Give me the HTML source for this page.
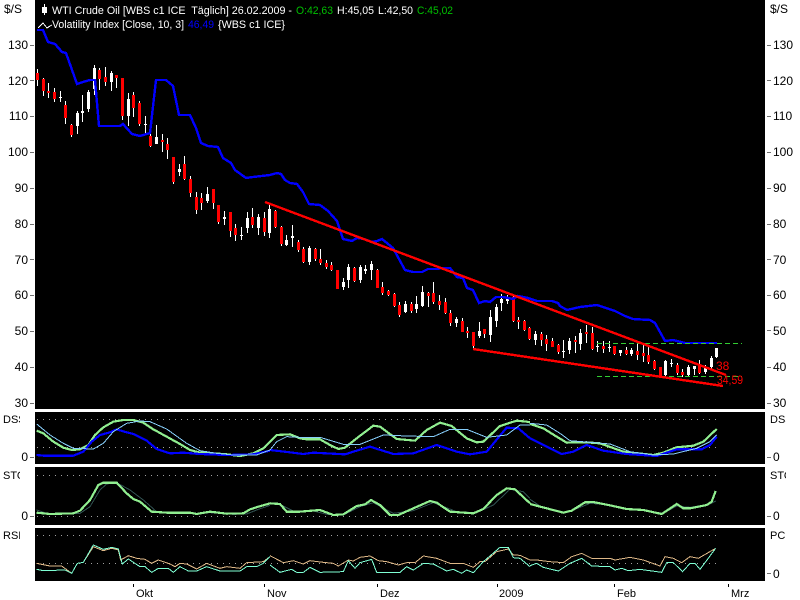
<!DOCTYPE html>
<html>
<head>
<meta charset="utf-8">
<title>WTI Crude Oil</title>
<style>
html,body{margin:0;padding:0;background:#fff;width:800px;height:600px;overflow:hidden}
svg{display:block}
text{font-family:"Liberation Sans",sans-serif;font-size:12px;fill:#000}
.n{font-size:11px}
.l{fill:#fff;font-size:11px}
.c{fill:none;stroke-linejoin:miter;shape-rendering:crispEdges;vector-effect:non-scaling-stroke}
.g{stroke:#90ee90;stroke-width:2.2}
.b{stroke:#0000ff;stroke-width:2.2}
.s{stroke:#87cefa;stroke-width:1}
.d{stroke:#2f4f4f;stroke-width:1}
.t{stroke:#deb887;stroke-width:1}
.q{stroke:#7fffd4;stroke-width:1}
</style>
</head>
<body>
<svg width="800" height="600" viewBox="0 0 800 600" xmlns="http://www.w3.org/2000/svg">
<defs>
<clipPath id="cl"><rect x="0" y="400" width="20" height="190"/></clipPath>
<clipPath id="cr"><rect x="765" y="400" width="21" height="190"/></clipPath>
</defs>
<rect width="800" height="600" fill="#fff"/>
<rect x="35" y="0" width="730" height="409" fill="#000"/>
<rect x="35" y="412" width="730" height="52" fill="#000"/>
<rect x="35" y="467" width="730" height="58" fill="#000"/>
<rect x="35" y="528" width="730" height="53" fill="#000"/>

<!-- axis ticks -->
<path shape-rendering="crispEdges" fill="none" stroke="#707070" stroke-width="1" d="M30 45.5h4M30 80.5h4M30 116.5h4M30 152.5h4M30 188.5h4M30 224.5h4M30 259.5h4M30 295.5h4M30 331.5h4M30 367.5h4M30 403.5h4M30 457.5h4M30 516.5h4M767 45.5h4M767 80.5h4M767 116.5h4M767 152.5h4M767 188.5h4M767 224.5h4M767 259.5h4M767 295.5h4M767 330.5h4M767 367.5h4M767 403.5h4M767 457.5h4M767 516.5h4M767 573.5h4"/>
<path shape-rendering="crispEdges" fill="none" stroke="#000" stroke-width="1" d="M133.5 584v3M264.5 584v3M377.5 584v3M497.5 584v3M614.5 584v3M728.5 584v3"/>

<!-- left labels -->
<text x="4" y="13">$/S</text>
<g text-anchor="end">
<text x="28" y="49">130</text><text x="28" y="85">120</text><text x="28" y="120">110</text><text x="28" y="156">100</text><text x="28" y="192">90</text><text x="28" y="228">80</text><text x="28" y="264">70</text><text x="28" y="299">60</text><text x="28" y="335">50</text><text x="28" y="371">40</text><text x="28" y="407">30</text><text x="28" y="461">0</text><text x="28" y="520">0</text>
</g>
<g clip-path="url(#cl)">
<text class="n" x="3" y="423">DSS</text><text class="n" x="3" y="479">STO</text><text class="n" x="3" y="539">RSI</text>
</g>
<!-- right labels -->
<text x="770" y="13">$/S</text>
<text x="773" y="49">130</text><text x="773" y="85">120</text><text x="773" y="120">110</text><text x="773" y="156">100</text><text x="773" y="192">90</text><text x="773" y="228">80</text><text x="773" y="264">70</text><text x="773" y="299">60</text><text x="773" y="335">50</text><text x="773" y="371">40</text><text x="773" y="407">30</text><text x="773" y="461">0</text><text x="773" y="520">0</text><text x="773" y="578">0</text>
<g clip-path="url(#cr)">
<text class="n" x="770" y="423">DSS</text><text class="n" x="770" y="479">STO</text><text class="n" x="770" y="539">PCR</text>
</g>
<!-- x labels -->
<text class="n" x="136" y="597">Okt</text><text class="n" x="267" y="597">Nov</text><text class="n" x="380" y="597">Dez</text><text class="n" x="499" y="597">2009</text><text class="n" x="617" y="597">Feb</text><text class="n" x="731" y="597">Mrz</text>

<!-- candle wicks -->
<path shape-rendering="crispEdges" fill="none" stroke="#fff" stroke-width="1" d="M37.5 69V86M43.5 78V96M48.5 83V98M54.5 88V102M60.5 91V102M65.5 101V124M71.5 124V137M77.5 111V134M82.5 95V122M88.5 90V112M94.5 65V95M99.5 68V90M105.5 67V86M111.5 71V91M116.5 75V88M122.5 78V120M128.5 93V126M133.5 92V117M139.5 101V126M145.5 116V134M150.5 132V147M156.5 125V144M162.5 134V152M167.5 138V159M173.5 157V184M179.5 164V176M184.5 156V180M190.5 176V197M196.5 192V214M201.5 193V210M207.5 187V203M213.5 189V209M218.5 205V224M224.5 211V225M230.5 212V237M235.5 224V241M241.5 227V240M247.5 212V233M252.5 208V228M258.5 214V235M264.5 212V236M269.5 205V238M275.5 210V228M281.5 226V246M286.5 235V246M292.5 225V247M298.5 240V252M303.5 247V263M309.5 246V265M315.5 248V261M320.5 249V265M326.5 260V269M331.5 262V271M337.5 270V289M343.5 278V290M348.5 264V288M354.5 267V282M360.5 265V283M365.5 265V274M371.5 261V280M377.5 269V288M382.5 282V295M388.5 290V296M394.5 293V307M399.5 302V317M405.5 301V313M411.5 302V313M416.5 296V313M422.5 286V307M428.5 292V307M433.5 282V304M439.5 295V310M445.5 298V314M450.5 310V326M456.5 317V327M462.5 318V332M467.5 327V338M473.5 332V349M479.5 322V338M484.5 329V338M490.5 310V342M496.5 304V327M501.5 294V311M507.5 295V304M513.5 295V322M518.5 317V329M524.5 320V331M529.5 327V340M535.5 331V345M541.5 332V346M546.5 335V351M552.5 338V347M558.5 344V354M563.5 340V358M569.5 338V354M575.5 336V353M580.5 329V350M586.5 325V343M592.5 327V350M597.5 341V352M603.5 341V353M609.5 341V352M614.5 346V355M620.5 350V356M626.5 347V355M631.5 348V356M637.5 343V360M643.5 344V362M648.5 346V364M654.5 360V370M660.5 367V377M665.5 360V377M671.5 359V367M677.5 363V375M682.5 369V377M688.5 365V376M694.5 366V375M699.5 360V374M705.5 365V374M711.5 356V369M716.5 348V358"/>
<!-- red bodies -->
<path shape-rendering="crispEdges" fill="none" stroke="#f00" stroke-width="3" d="M37.5 73V80M43.5 79V91M48.5 91V93M54.5 92V99M65.5 105V118M71.5 125V135M99.5 70V79M105.5 77V82M116.5 75V78M122.5 78V116M133.5 95V108M139.5 103V124M150.5 136V146M162.5 140V142M167.5 144V150M173.5 157V182M184.5 164V179M190.5 179V193M196.5 197V210M201.5 198V203M213.5 189V203M218.5 205V222M230.5 212V231M235.5 228V235M252.5 217V225M264.5 218V232M275.5 211V227M281.5 227V244M298.5 242V250M303.5 249V262M315.5 249V259M320.5 259V263M326.5 263V267M331.5 265V270M337.5 270V289M354.5 268V281M377.5 270V288M382.5 287V293M388.5 291V295M394.5 294V306M399.5 305V315M411.5 304V311M428.5 293V296M433.5 293V302M439.5 301V305M445.5 302V313M450.5 313V323M462.5 321V332M467.5 331V333M473.5 332V346M484.5 329V334M513.5 297V321M518.5 320V322M524.5 321V330M529.5 328V339M541.5 334V340M546.5 339V344M552.5 341V347M558.5 345V352M575.5 340V342M586.5 332V334M592.5 333V349M603.5 346V349M614.5 346V354M626.5 350V354M637.5 351V355M643.5 353V356M648.5 355V362M654.5 361V369M660.5 367V376M677.5 365V373M682.5 372V375M699.5 366V373"/>
<!-- white bodies -->
<path shape-rendering="crispEdges" fill="none" stroke="#fff" stroke-width="3" d="M60.5 97V98M77.5 113V126M82.5 111V113M88.5 92V109M94.5 68V89M111.5 73V82M128.5 99V116M145.5 124V125M156.5 137V144M179.5 169V172M207.5 194V201M224.5 217V219M241.5 235V236M247.5 218V228M258.5 217V228M269.5 209V233M286.5 240V245M292.5 236V238M309.5 248V262M343.5 282V287M348.5 267V280M360.5 267V280M365.5 269V271M371.5 264V270M405.5 304V312M416.5 304V309M422.5 292V306M456.5 319V323M479.5 331V336M490.5 317V335M496.5 307V321M501.5 299V303M507.5 299V301M535.5 334V340M563.5 351V352M569.5 341V350M580.5 333V344M597.5 346V347M609.5 347V348M620.5 350V353M631.5 350V354M665.5 361V375M671.5 363V364M688.5 367V375M694.5 366V369M705.5 367V372M711.5 358V367M716.5 348V357"/>

<!-- blue volatility line -->
<polyline class="c" stroke="#0000ff" stroke-width="2.4" points="37,30 43,30 48,42 55,44 62,52 66,53 77,84 83,82 90,80 95,80 99,126 120,126 123,124 132,134 140,136 150,133 156,80 166,80 173,86 179,115 190,115 196,128 201,143 208,146 218,147 223,158 231,163 235,170 246,178 253,177 270,175 277,173 281,174 285,180 290,183 297,184 303,192 309,204 320,205 328,211 337,221 343,239 352,241 357,238 364,239 372,242 377,241 382,239 393,248 405,270 413,272 422,272 428,269 437,269 442,268 450,268 457,277 463,278 467,288 473,290 479,303 485,301 490,302 496,297 503,297 513,299 518,296 528,298 537,301 552,301 558,303 560,306 567,310 580,307 597,305 615,311 625,316 633,319 650,320 655,323 665,341 673,340 685,343 717,343"/>
<!-- dashed green -->
<path shape-rendering="crispEdges" fill="none" stroke="#32cd32" stroke-width="1" stroke-dasharray="5 3" d="M597 343.5H742M597 376.5H742"/>
<!-- red trend lines -->
<path class="c" stroke="#ff0000" stroke-width="2.4" d="M265 202L726 375M473 349L723 386"/>
<text x="716" y="370" style="fill:#f00">38</text>
<text x="717" y="384" style="fill:#f00" textLength="26" lengthAdjust="spacingAndGlyphs">34,59</text>

<!-- legend -->
<path shape-rendering="crispEdges" fill="none" stroke="#fff" stroke-width="1" d="M44.5 4V15M38 28L43 23L47 28L50 26L52 25"/>
<rect x="42" y="7" width="5" height="6" fill="#fff"/>
<text x="52" y="14" class="l" xml:space="preserve" textLength="240" lengthAdjust="spacingAndGlyphs">WTI Crude Oil [WBS c1 ICE  Täglich] 26.02.2009 -</text>
<text x="296" y="14" class="l" style="fill:#00c000" textLength="37" lengthAdjust="spacingAndGlyphs">O:42,63</text>
<text x="337" y="14" class="l" textLength="37" lengthAdjust="spacingAndGlyphs">H:45,05</text>
<text x="378" y="14" class="l" textLength="35" lengthAdjust="spacingAndGlyphs">L:42,50</text>
<text x="417" y="14" class="l" style="fill:#00c000" textLength="36" lengthAdjust="spacingAndGlyphs">C:45,02</text>
<text x="52" y="28" class="l" textLength="132" lengthAdjust="spacingAndGlyphs">Volatility Index [Close, 10, 3]</text>
<text x="188" y="28" class="l" style="fill:#0000ff" textLength="26" lengthAdjust="spacingAndGlyphs">46,49</text>
<text x="218" y="28" class="l" textLength="67" lengthAdjust="spacingAndGlyphs">{WBS c1 ICE}</text>

<!-- dotted guide lines -->
<path shape-rendering="crispEdges" fill="none" stroke="#a0a0a0" stroke-width="1" stroke-dasharray="1 5" d="M37 419.5H716M37 447.5H716M37 475.5H716M37 516.5H716M37 535.5H716M37 563.5H716"/>

<!-- DSS -->
<g transform="translate(0,400) scale(.33333)">
<polyline class="c g" points="110,92 130,100 160,125 190,143 215,150 240,148 265,135 285,105 310,82 340,65 370,60 400,60 430,68 460,88 500,110 540,132 570,150 600,158 640,160 680,163 720,168 760,160 790,145 810,125"/>
<polyline class="c b" points="110,165 130,167 220,167 250,155 275,125 300,105 330,97 350,88 380,97 400,102 440,122 470,147 510,160 550,158 600,162 680,165 760,163 810,152"/>
<polyline class="c s" points="110,72 150,105 190,130 220,145 280,147 310,130 340,95 380,70 420,63 450,65 500,87 560,130 600,152 650,160 700,165 770,165 810,150"/>
</g>
<g transform="translate(270,410) scale(.33333)">
<polyline class="c g" points="0,95 20,75 60,73 90,85 110,88 150,88 180,105 205,117 225,113 260,85 310,47 330,50 380,87 435,92 470,60 510,38 545,48 590,85 620,97 640,95 690,48 740,32 770,35 780,37"/>
<polyline class="c b" points="0,120 60,127 100,132 130,128 225,133 250,125 300,110 370,132 430,130 500,105 560,125 600,133 650,125 710,53 745,55 780,85"/>
<polyline class="c s" points="0,120 20,95 50,80 90,82 150,82 220,103 270,103 340,75 410,78 490,80 540,58 590,58 650,82 710,75 750,45 780,45"/>
</g>
<g transform="translate(530,400) scale(.33333)">
<polyline class="c g" points="0,72 40,85 80,110 110,128 170,127 210,130 280,155 370,165 400,158 440,142 490,137 520,125 560,87"/>
<polyline class="c b" points="0,115 50,140 95,162 130,155 170,135 220,152 290,162 380,168 440,148 515,148 540,135 560,110"/>
<polyline class="c s" points="0,70 50,75 90,100 120,122 180,127 240,132 300,155 370,165 430,162 500,145 540,125 560,105"/>
</g>

<!-- STO -->
<g transform="translate(0,400) scale(.33333)">
<polyline class="c d" points="110,330 140,340 240,340 270,320 300,270 320,252 350,248 390,270 430,300 470,335 490,338 570,341 630,338 700,343 740,342 775,328 810,316"/>
<polyline class="c g" points="110,338 150,342 220,340 240,332 270,300 295,255 310,248 350,248 380,280 400,297 420,305 455,335 500,338 570,338 590,342 630,335 680,341 730,340 750,328 775,320 810,310"/>
</g>
<g transform="translate(270,410) scale(.33333)">
<polyline class="c d" points="0,280 30,283 70,303 130,303 170,313 220,315 270,290 310,278 370,310 430,302 490,278 560,305 620,308 670,285 720,238 760,245 780,265"/>
<polyline class="c g" points="0,280 30,282 50,305 90,305 150,300 190,315 220,313 260,288 285,283 303,270 330,285 360,315 385,315 430,295 480,273 500,278 540,305 610,310 640,297 680,255 710,235 735,238 780,280"/>
</g>
<g transform="translate(530,400) scale(.33333)">
<polyline class="c d" points="0,298 30,318 100,338 130,330 180,310 240,315 300,328 350,332 400,340 440,318 480,322 540,312 557,303"/>
<polyline class="c g" points="0,312 50,325 100,338 125,332 165,307 190,306 240,316 290,327 340,330 395,342 440,312 460,325 480,325 530,315 545,305 557,273"/>
</g>

<!-- RSI / PCR -->
<g transform="translate(0,400) scale(.33333)">
<polyline class="c t" points="110,490 150,498 185,498 215,520 232,490 250,487 280,440 310,452 335,445 355,450 362,480 385,467 410,475 435,478 455,490 475,480 510,492 525,500 540,490 560,492 590,507 620,490 660,505 680,500 720,505 740,488 790,485 810,470"/>
<polyline class="c q" points="110,508 130,512 195,510 215,520 232,490 250,487 280,435 310,448 335,442 355,447 367,492 385,477 420,500 435,500 455,517 475,505 505,505 520,517 540,500 565,513 590,513 620,500 660,513 720,513 740,500 770,500 790,490 810,470"/>
</g>
<g transform="translate(270,410) scale(.33333)">
<polyline class="c t" points="0,437 40,458 70,452 100,462 120,452 160,457 190,460 205,468 235,450 250,453 270,442 300,438 325,452 350,455 385,465 410,458 435,458 460,438 500,445 540,460 580,460 610,472 630,455 645,455 680,425 715,417 730,435 750,436 780,450"/>
<polyline class="c q" points="0,465 30,487 65,478 80,487 100,487 120,472 150,487 220,485 235,452 255,475 270,458 305,448 320,487 390,487 410,470 430,480 460,460 490,462 530,483 550,478 575,490 590,480 610,488 640,455 690,412 715,412 730,443 750,445 780,470"/>
</g>
<g transform="translate(530,400) scale(.33333)">
<polyline class="c t" points="0,480 20,480 60,485 100,488 125,470 155,460 185,475 240,475 255,480 300,472 340,480 390,498 405,470 430,475 455,488 480,470 505,475 557,445"/>
<polyline class="c q" points="0,497 20,490 40,502 85,513 120,490 155,475 185,498 240,500 255,510 275,505 295,512 330,508 395,517 410,488 430,488 458,515 480,490 495,490 510,508 557,445"/>
</g>
</svg>
</body>
</html>
